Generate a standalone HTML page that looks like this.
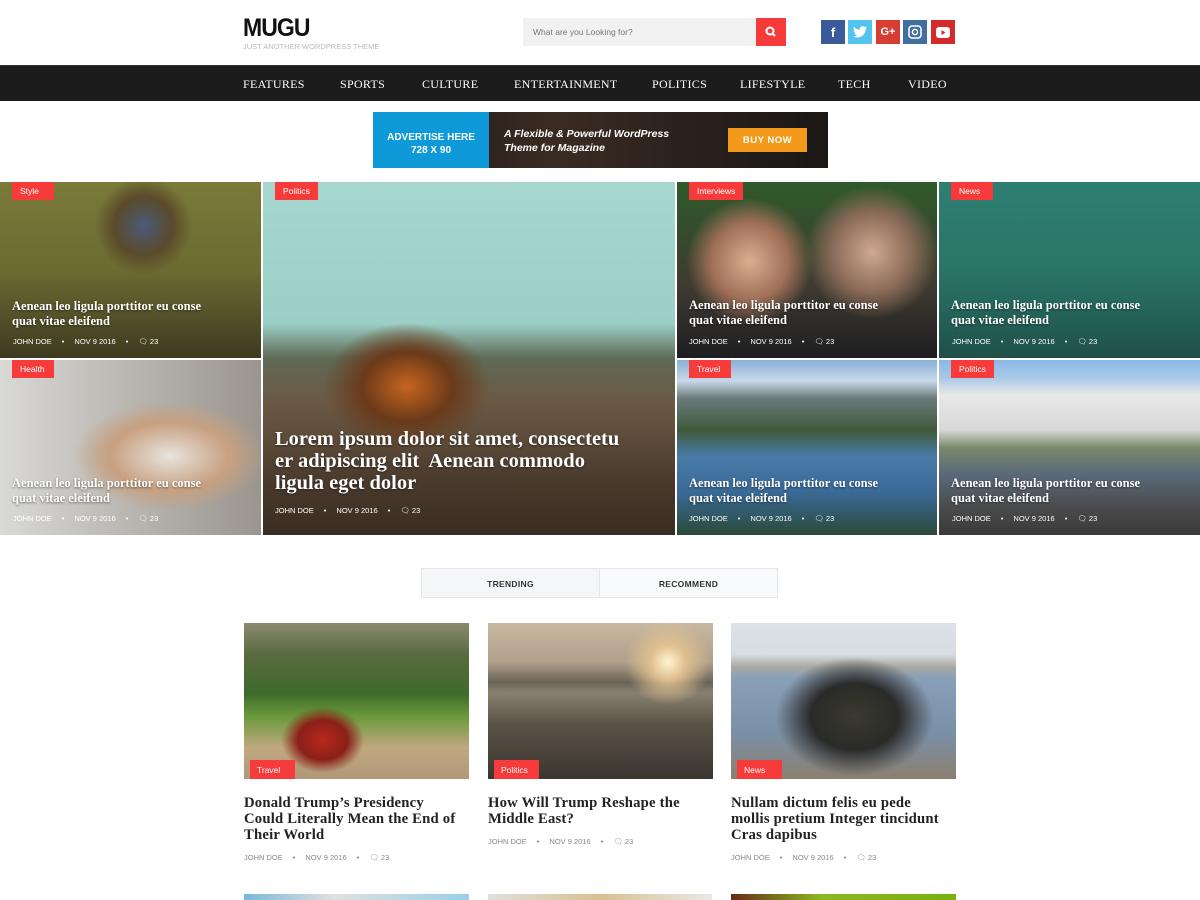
<!DOCTYPE html>
<html><head><meta charset="utf-8"><style>
*{margin:0;padding:0;box-sizing:border-box}
body{width:1200px;height:900px;overflow:hidden;background:#fff;font-family:"Liberation Sans",sans-serif;position:relative}
.abs{position:absolute}
.logo{left:243px;top:14px;font:bold 25px "Liberation Sans",sans-serif;color:#111;letter-spacing:-1px;transform:scaleX(0.92);transform-origin:left}
.tag{left:243px;top:42px;font-size:7.5px;color:#bbb;letter-spacing:0}
.search{left:523px;top:18px;width:233px;height:28px;background:#f1f1f1;font-size:8.5px;color:#777;padding:9px 10px}
.sbtn{left:756px;top:18px;width:30px;height:28px;background:#f73b3b}
.soc{top:20px;width:24px;height:24px;display:flex;align-items:center;justify-content:center;color:#fff;font-weight:bold;font-size:13px}
.nav{left:0;top:65px;width:1200px;height:36px;background:#1c1c1c;border-top:1px solid #333}
.nav span{position:absolute;top:11px;color:#fff;font:12px "Liberation Serif",serif;letter-spacing:0.3px}
.ad{left:373px;top:112px;width:455px;height:56px;background:linear-gradient(90deg,#1d1a18,#3a2b22 40%,#2a211c 70%,#1a1716)}
.ad .blue{position:absolute;left:0;top:0;width:116px;height:56px;background:#0e9ad8;color:#fff;text-align:center;font-size:10px;font-weight:bold;padding-top:19px;line-height:13px}
.tile{position:absolute;overflow:hidden}
.tile .lab{position:absolute;left:12px;top:0;background:#f73b3b;color:#fff;font:8.5px "Liberation Sans",sans-serif;padding:4px 8px;height:18px;min-width:42px}
.tile .ttl{position:absolute;left:12px;color:#fff;font:bold 12.5px/15px "Liberation Serif",serif;text-shadow:0 1px 2px rgba(0,0,0,.5)}
.meta{position:absolute;font:7.5px "Liberation Sans",sans-serif;color:#fff;white-space:nowrap}
.meta i{font-style:normal;display:inline-block;margin:0 10px}
.tabs{left:421px;top:568px;width:357px;height:30px;border:1px solid #e4e6ea;background:#f5f6f8;display:flex}
.tabs div{flex:1;text-align:center;font:bold 8.5px "Liberation Sans",sans-serif;color:#333;padding-top:10px;letter-spacing:0.3px}
.card{position:absolute;top:623px;width:225px}
.card .img{height:156px;position:relative}
.card .lab{position:absolute;left:6px;bottom:0;background:#f73b3b;color:#fff;font:8.5px "Liberation Sans",sans-serif;padding:5px 7px;width:45px;height:19px}
.card h3{margin-top:16px;font:bold 14.7px/16px "Liberation Serif",serif;color:#222;letter-spacing:0.2px;white-space:nowrap}
.card .m{margin-top:10px;font:7.5px "Liberation Sans",sans-serif;color:#888}
.card .m i{font-style:normal;margin:0 10px}
</style></head><body>
<div class="abs logo">MUGU</div>
<div class="abs tag">JUST ANOTHER WORDPRESS THEME</div>
<div class="abs search">What are you Looking for?</div>
<div class="abs sbtn"><svg width="30" height="28"><circle cx="14" cy="13" r="3.5" stroke="#fff" stroke-width="2" fill="none"/><line x1="16.5" y1="15.5" x2="19" y2="18" stroke="#fff" stroke-width="2"/></svg></div>
<div class="abs soc" style="left:821px;background:#3b5a9a">f</div>
<div class="abs soc" style="left:848px;background:#55c3f0"><svg width="14" height="12" viewBox="0 0 24 20"><path d="M24 2.4a10 10 0 0 1-2.8.8A5 5 0 0 0 23.3.4a10 10 0 0 1-3.1 1.2A4.9 4.9 0 0 0 11.8 6 14 14 0 0 1 1.7.9a4.9 4.9 0 0 0 1.5 6.6 5 5 0 0 1-2.2-.6 4.9 4.9 0 0 0 3.900 4.9 5 5 0 0 1-2.2.1 4.9 4.9 0 0 0 4.6 3.4A9.9 9.9 0 0 1 0 17.3 14 14 0 0 0 7.5 19.5c9 0 14-7.5 14-14v-.6A10 10 0 0 0 24 2.4z" fill="#fff"/></svg></div>
<div class="abs soc" style="left:876px;background:#d73d32;font-size:11px">G+</div>
<div class="abs soc" style="left:903px;background:#3f6fa0"><svg width="14" height="14"><rect x="1" y="1" width="12" height="12" rx="3" stroke="#fff" stroke-width="1.6" fill="none"/><circle cx="7" cy="7" r="2.6" stroke="#fff" stroke-width="1.5" fill="none"/></svg></div>
<div class="abs soc" style="left:931px;background:#d42a2a"><svg width="14" height="11"><rect width="14" height="11" rx="3" fill="#fff"/><path d="M5.5 3 L9.5 5.5 L5.5 8z" fill="#d42a2a"/></svg></div>
<div class="abs nav"><span style="left:243px">FEATURES</span><span style="left:340px">SPORTS</span><span style="left:422px">CULTURE</span><span style="left:514px">ENTERTAINMENT</span><span style="left:652px">POLITICS</span><span style="left:740px">LIFESTYLE</span><span style="left:838px">TECH</span><span style="left:908px">VIDEO</span></div>
<div class="abs ad"><div class="blue">ADVERTISE HERE<br>728 X 90</div>
<div style="position:absolute;left:131px;top:15px;color:#fff;font:italic bold 10.5px/14px 'Liberation Sans',sans-serif">A Flexible &amp; Powerful WordPress<br>Theme for Magazine</div>
<div style="position:absolute;left:355px;top:16px;width:79px;height:24px;background:#f39a1b;color:#fff;font:bold 9.5px 'Liberation Sans',sans-serif;text-align:center;padding-top:7px;letter-spacing:.5px">BUY NOW</div></div>

<div class="tile" style="left:0;top:182px;width:261px;height:176px;background:radial-gradient(circle at 55% 25%,#4a5a7a 0,#5a4a2a 15%,transparent 25%),linear-gradient(180deg,#7a7a3a,#6b6b32 50%,#3e3a20)"><div class="lab" style="left:12px">Style</div><div class="ttl" style="top:117px">Aenean leo ligula porttitor eu conse<br>quat vitae eleifend</div><div class="meta" style="left:13px;top:155px">JOHN DOE<i>•</i>NOV 9 2016<i>•</i>&#128488; 23</div></div>
<div class="tile" style="left:0;top:360px;width:261px;height:175px;background:radial-gradient(ellipse at 65% 55%,#e8e4de 0,#c7a080 25%,transparent 40%),linear-gradient(90deg,#d9d9d6,#b9b6b0 50%,#9a958e)"><div class="lab">Health</div><div class="ttl" style="top:116px">Aenean leo ligula porttitor eu conse<br>quat vitae eleifend</div><div class="meta" style="left:13px;top:154px">JOHN DOE<i>•</i>NOV 9 2016<i>•</i>&#128488; 23</div></div>
<div class="tile" style="left:263px;top:182px;width:412px;height:353px;background:radial-gradient(ellipse at 35% 58%,#c8641e 0,#6a3a1a 12%,transparent 22%),linear-gradient(180deg,#a7d7cf 0,#9ccfc6 40%,#5e6a55 50%,#6b5a45 62%,#4a3a2c 85%,#3a2c22)"><div class="lab">Politics</div><div class="ttl" style="top:246px;font-size:20.5px;line-height:22px">Lorem ipsum dolor sit amet, consectetu<br>er adipiscing elit&nbsp; Aenean commodo<br>ligula eget dolor</div><div class="meta" style="left:12px;top:324px">JOHN DOE<i>•</i>NOV 9 2016<i>•</i>&#128488; 23</div></div>
<div class="tile" style="left:677px;top:182px;width:260px;height:176px;background:radial-gradient(circle at 28% 45%,#d8b090 0,#a07058 18%,transparent 30%),radial-gradient(circle at 75% 40%,#d0a890 0,#8a6a58 18%,transparent 30%),linear-gradient(180deg,#2f5a2a,#3e3a30 60%,#1e1e22)"><div class="lab">Interviews</div><div class="ttl" style="top:116px">Aenean leo ligula porttitor eu conse<br>quat vitae eleifend</div><div class="meta" style="left:12px;top:155px">JOHN DOE<i>•</i>NOV 9 2016<i>•</i>&#128488; 23</div></div>
<div class="tile" style="left:939px;top:182px;width:261px;height:176px;background:linear-gradient(180deg,#2e7f72,#2a7568 50%,#1f5048)"><div class="lab">News</div><div class="ttl" style="top:116px">Aenean leo ligula porttitor eu conse<br>quat vitae eleifend</div><div class="meta" style="left:13px;top:155px">JOHN DOE<i>•</i>NOV 9 2016<i>•</i>&#128488; 23</div></div>
<div class="tile" style="left:677px;top:360px;width:260px;height:175px;background:linear-gradient(180deg,#8ab0d8 0,#c8d8e8 12%,#6a7a7a 22%,#3e5a3a 40%,#4a7aa8 55%,#3a6a98 75%,#2a4a3a)"><div class="lab">Travel</div><div class="ttl" style="top:116px">Aenean leo ligula porttitor eu conse<br>quat vitae eleifend</div><div class="meta" style="left:12px;top:154px">JOHN DOE<i>•</i>NOV 9 2016<i>•</i>&#128488; 23</div></div>
<div class="tile" style="left:939px;top:360px;width:261px;height:175px;background:linear-gradient(180deg,#8ab8e8 0,#a8c8e8 10%,#e8e8e8 20%,#d8d8d8 40%,#7a8a6a 50%,#5a6a7a 65%,#4a4a4a 85%,#3a3a3a)"><div class="lab">Politics</div><div class="ttl" style="top:116px">Aenean leo ligula porttitor eu conse<br>quat vitae eleifend</div><div class="meta" style="left:13px;top:154px">JOHN DOE<i>•</i>NOV 9 2016<i>•</i>&#128488; 23</div></div>

<div class="abs tabs"><div>TRENDING</div><div style="background:#f9fafb;border-left:1px solid #e4e6ea">RECOMMEND</div></div>

<div class="card" style="left:244px"><div class="img" style="background:radial-gradient(ellipse at 35% 75%,#b8281e 0,#8a2018 12%,transparent 20%),linear-gradient(180deg,#8a8a70 0,#5a6a40 20%,#3e6a2a 45%,#6a9a3a 60%,#c0a880 80%,#b09878)"><div class="lab">Travel</div></div><h3>Donald Trump’s Presidency<br>Could Literally Mean the End of<br>Their World</h3><div class="m">JOHN DOE<i>•</i>NOV 9 2016<i>•</i>&#128488; 23</div></div>
<div class="card" style="left:488px"><div class="img" style="background:radial-gradient(circle at 80% 25%,#fff4d0 0,#e0c090 8%,transparent 20%),linear-gradient(180deg,#c8b8a0 0,#b0a08a 25%,#6a6458 38%,#8a8070 45%,#5a5246 65%,#3a3630)"><div class="lab">Politics</div></div><h3>How Will Trump Reshape the<br>Middle East?</h3><div class="m">JOHN DOE<i>•</i>NOV 9 2016<i>•</i>&#128488; 23</div></div>
<div class="card" style="left:731px"><div class="img" style="background:radial-gradient(ellipse at 55% 60%,#3a3a30 0,#2a2a28 25%,transparent 45%),linear-gradient(180deg,#dde2e8 0,#d8dde2 20%,#aaaaa0 28%,#8aa0b8 35%,#7a90a8 70%,#8a8070)"><div class="lab">News</div></div><h3>Nullam dictum felis eu pede<br>mollis pretium Integer tincidunt<br>Cras dapibus</h3><div class="m">JOHN DOE<i>•</i>NOV 9 2016<i>•</i>&#128488; 23</div></div>

<div class="abs" style="left:244px;top:894px;width:225px;height:6px;background:linear-gradient(90deg,#7ab8d8,#e0e0e0 40%,#9ad0e8)"></div>
<div class="abs" style="left:488px;top:894px;width:224px;height:6px;background:linear-gradient(90deg,#e0e0e0,#d8c090 50%,#e8e8e8)"></div>
<div class="abs" style="left:731px;top:894px;width:225px;height:6px;background:linear-gradient(90deg,#6a2a1a,#8ab820 40%,#7ab010)"></div>
</body></html>
